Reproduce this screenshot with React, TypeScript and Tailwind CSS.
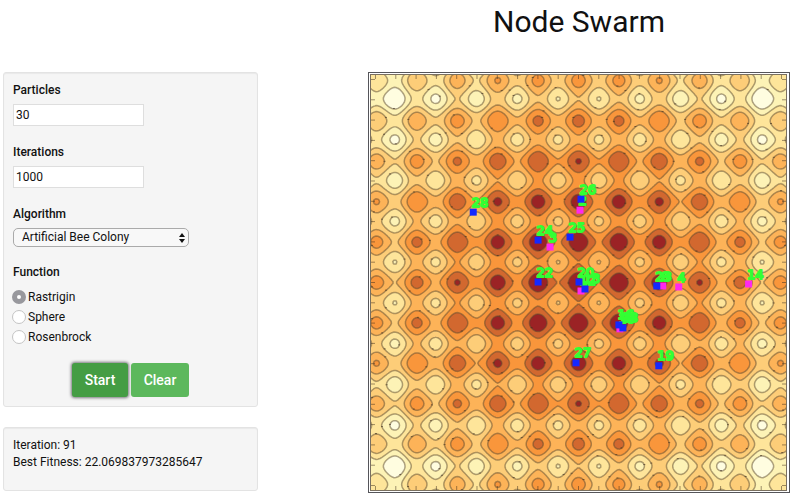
import { useId } from "react";
import type { ReactNode } from "react";

const SIZE = 418;
const CENTER = 209;
const UNIT = 40.7;
const STEP = 2;
const CELLS = SIZE / STEP;

const rastrigin = (x: number, y: number) =>
  20 + x * x - 10 * Math.cos(2 * Math.PI * x) + y * y - 10 * Math.cos(2 * Math.PI * y);

const BANDS = [
  { level: 70, fill: "#fdf3b6" },
  { level: 60, fill: "#fee59a" },
  { level: 50, fill: "#fdcd78" },
  { level: 40, fill: "#fdb358" },
  { level: 30, fill: "#f9963b" },
  { level: 20, fill: "#d2682f" },
  { level: 10, fill: "#9b2325" },
];

type Point = [number, number];

function sample(i: number, j: number) {
  if (i < 0 || j < 0 || i > CELLS || j > CELLS) return 1000;
  return rastrigin((i * STEP - CENTER) / UNIT, (j * STEP - CENTER) / UNIT);
}

// Marching squares: returns closed loops around the areas below the level.
function traceLoops(level: number): Point[][] {
  const next = new Map<string, string>();
  const points = new Map<string, Point>();
  const edge = (i1: number, j1: number, i2: number, j2: number) => {
    const forward = i1 < i2 || j1 < j2;
    const [a, b, c, d] = forward ? [i1, j1, i2, j2] : [i2, j2, i1, j1];
    const key = `${a},${b},${c},${d}`;
    if (!points.has(key)) {
      const va = sample(a, b);
      const vb = sample(c, d);
      const t = (level - va) / (vb - va);
      points.set(key, [(a + (c - a) * t) * STEP, (b + (d - b) * t) * STEP]);
    }
    return key;
  };
  for (let j = -1; j <= CELLS; j++) {
    for (let i = -1; i <= CELLS; i++) {
      const corners: Point[] = [[i, j], [i + 1, j], [i + 1, j + 1], [i, j + 1]];
      const below = corners.map(([a, b]) => sample(a, b) < level);
      const leaving: string[] = [];
      const entering: string[] = [];
      for (let k = 0; k < 4; k++) {
        const n = (k + 1) % 4;
        if (below[k] === below[n]) continue;
        const key = edge(corners[k][0], corners[k][1], corners[n][0], corners[n][1]);
        if (below[k]) leaving.push(key);
        else entering.push(key);
      }
      if (leaving.length === 1) next.set(leaving[0], entering[0]);
      if (leaving.length === 2) {
        const first = below[0] ? 1 : 0;
        next.set(leaving[0], entering[first]);
        next.set(leaving[1], entering[1 - first]);
      }
    }
  }
  const loops: Point[][] = [];
  while (next.size > 0) {
    let key: string | undefined = next.keys().next().value;
    const loop: Point[] = [];
    while (key !== undefined && next.has(key)) {
      loop.push(points.get(key) as Point);
      const following: string | undefined = next.get(key);
      next.delete(key);
      key = following;
    }
    if (loop.length > 4) loops.push(loop);
  }
  return loops;
}

const contours = BANDS.map((band) => {
  const loops = traceLoops(band.level);
  return {
    ...band,
    path: loops
      .map((loop) => "M" + loop.map(([x, y]) => `${x.toFixed(1)} ${y.toFixed(1)}`).join("L") + "Z")
      .join(""),
    specks: loops.filter((loop) => loop.length > 16).map((loop, i) => loop[(i * 17 + 5) % loop.length]),
  };
});

const ticks = Array.from({ length: 21 }, (_, i) => CENTER + ((i - 10) / 2) * UNIT);

const BLUE = "#1428ff";
const PINK = "#ff28f0";

// x and y are the middle of each marker inside the plot.
const particles = [
  { x: 211, y: 137, color: PINK, label: "2" },
  { x: 181, y: 174, color: PINK, label: "3" },
  { x: 294, y: 213, color: PINK, label: "8" },
  { x: 310, y: 214, color: PINK, label: "4" },
  { x: 380, y: 211, color: PINK, label: "14" },
  { x: 212, y: 218, color: PINK, label: "12" },
  { x: 251, y: 256, color: PINK, label: "10" },
  { x: 216, y: 216, color: BLUE, label: "13" },
  { x: 210, y: 209, color: BLUE, label: "20" },
  { x: 250, y: 252, color: BLUE, label: "16" },
  { x: 254, y: 255, color: BLUE, label: "18" },
  { x: 290, y: 293, color: BLUE, label: "19" },
  { x: 169, y: 209, color: BLUE, label: "22" },
  { x: 288, y: 213, color: BLUE, label: "23" },
  { x: 169, y: 167, color: BLUE, label: "24" },
  { x: 201, y: 164, color: BLUE, label: "25" },
  { x: 212, y: 126, color: BLUE, label: "26" },
  { x: 207, y: 290, color: BLUE, label: "27" },
  { x: 104, y: 139, color: BLUE, label: "28" },
];

function SwarmPlot() {
  return (
    <svg viewBox="0 0 418 418" className="block w-full" role="img" aria-label="Swarm on the Rastrigin function">
      <rect width={SIZE} height={SIZE} fill="#fffde0" />
      {contours.map((c) => (
        <path key={c.level} d={c.path} fill={c.fill} stroke="#5c4a30" strokeOpacity={0.5} strokeWidth={1.5} />
      ))}
      {contours.map((c) =>
        c.specks.map(([x, y], i) => (
          <rect key={`${c.level}-${i}`} x={x - 1} y={y - 1} width={2} height={1} fill="#3a2a1a" fillOpacity={0.6} />
        )),
      )}
      {ticks.map((t) => (
        <path
          key={t}
          d={`M${t} 0v5M${t} 418v-5M0 ${t}h5M418 ${t}h-5`}
          stroke="#3a2a1a"
          strokeOpacity={0.5}
        />
      ))}
      <rect x={0.5} y={0.5} width={417} height={417} fill="none" stroke="#7a7060" />
      {particles.map((p) => (
        <text
          key={p.label}
          x={p.x - 2}
          y={p.y - 6}
          className="font-['DejaVu_Sans',sans-serif] text-[13px]"
          fill="#33ff33"
          stroke="#33ff33"
          strokeWidth={2}
          strokeLinejoin="round"
        >
          {p.label}
        </text>
      ))}
      {particles.map((p) => (
        <rect key={p.label} x={p.x - 4} y={p.y - 4} width={7} height={7} fill={p.color} />
      ))}
    </svg>
  );
}

function Panel({ children }: { children: ReactNode }) {
  return (
    <section className="rounded-[3px] border border-[#e3e3e3] bg-[#f5f5f5] px-[9px] shadow-[inset_0_1px_1px_rgba(0,0,0,0.05)]">
      {children}
    </section>
  );
}

function NumberField({ label, value }: { label: string; value: string }) {
  const id = useId();
  return (
    <div className="mb-[18px] flex flex-col items-start">
      <label htmlFor={id} className="mb-0.5 h-5 font-medium">{label}</label>
      <input
        id={id}
        type="text"
        inputMode="numeric"
        defaultValue={value}
        className="h-[22px] w-[131px] border border-[#dedede] bg-white px-0.5 outline-none"
      />
    </div>
  );
}

function RadioOption({ label, checked }: { label: string; checked?: boolean }) {
  return (
    <label className="-ml-px flex h-5 items-center gap-0.5">
      <input
        type="radio"
        name="function"
        defaultChecked={checked}
        className="size-3.5 appearance-none rounded-full border border-[#c4c4c4] bg-white checked:border-5 checked:border-[#98989d]"
      />
      {label}
    </label>
  );
}

export default function App() {
  return (
    <main className="grid grid-cols-[255px_1fr] gap-[110px] px-[3px] font-[Roboto,sans-serif] text-[12px] leading-[17px] text-[#111]">
      <div className="flex flex-col gap-5 pt-[72px]">
        <Panel>
          <form className="py-[9px]" onSubmit={(e) => e.preventDefault()}>
            <NumberField label="Particles" value="30" />
            <NumberField label="Iterations" value="1000" />
            <div className="flex flex-col items-start">
              <label htmlFor="algorithm" className="mb-0.5 h-5 font-medium">Algorithm</label>
              <div className="relative">
                <select
                  id="algorithm"
                  className="block h-[19px] w-44 appearance-none rounded-[5px] border border-[#aaa] bg-[#f8f8f8] pl-2"
                >
                  <option>Artificial Bee Colony</option>
                </select>
                <svg viewBox="0 0 6 10" className="pointer-events-none absolute top-[5px] right-1 h-2.5 w-1.5">
                  <path d="M0 4L3 0L6 4ZM0 6L3 10L6 6Z" fill="#111" />
                </svg>
              </div>
            </div>
            <fieldset className="mt-[17px]">
              <legend className="mb-1.5 font-medium">Function</legend>
              <RadioOption label="Rastrigin" checked />
              <RadioOption label="Sphere" />
              <RadioOption label="Rosenbrock" />
            </fieldset>
            <div className="mt-4 flex w-44 justify-end gap-[3px] text-[14px] font-medium text-white">
              <button
                type="submit"
                className="h-[34px] w-14 rounded-[3px] bg-[#449d44] shadow-[0_0_3px_1px_#77777c]"
              >
                Start
              </button>
              <button type="button" className="h-[34px] w-[58px] rounded-[3px] bg-[#5cb85c]">Clear</button>
            </div>
          </form>
        </Panel>
        <Panel>
          <div className="h-[62px] pt-[9px]">
            <p>Iteration: 91</p>
            <p>Best Fitness: 22.069837973285647</p>
          </div>
        </Panel>
      </div>
      <div>
        <h1 className="h-[72px] pt-1 text-center text-[30px] leading-9">Node Swarm</h1>
        <div className="border border-[#55555a] py-px pr-0.5 pl-px">
          <SwarmPlot />
        </div>
      </div>
    </main>
  );
}
